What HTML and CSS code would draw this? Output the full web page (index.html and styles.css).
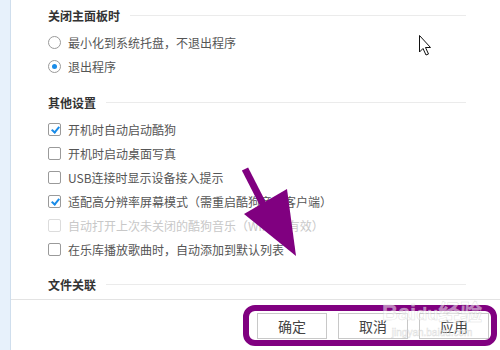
FILE: index.html
```html
<!DOCTYPE html>
<html>
  <head>
    <meta charset="UTF-8">
    <title>设置</title>
    <link rel="stylesheet" href="styles.css">
  </head>
  <body>
    <div class="side"></div>
    <div class="main">
      <div class="content">
        <div class="section-title"><span>关闭主面板时</span></div>
        <div class="options">
          <label class="option"><span class="radio"></span>最小化到系统托盘，不退出程序</label>
          <label class="option"><span class="radio checked"></span>退出程序</label>
        </div>

        <div class="section-title gap"><span>其他设置</span></div>
        <div class="options">
          <label class="option"><span class="check checked"></span>开机时自动启动酷狗</label>
          <label class="option"><span class="check"></span>开机时启动桌面写真</label>
          <label class="option"><span class="check"></span>USB连接时显示设备接入提示</label>
          <label class="option"><span class="check checked"></span>适配高分辨率屏幕模式（需重启酷狗音乐客户端）</label>
          <label class="option disabled"><span class="check"></span>自动打开上次未关闭的酷狗音乐（Win7下有效）</label>
          <label class="option"><span class="check"></span>在乐库播放歌曲时，自动添加到默认列表</label>
        </div>

        <div class="section-title gap2"><span>文件关联</span></div>
      </div>

      <div class="footer">
        <button class="btn">确定</button>
        <button class="btn">取消</button>
        <button class="btn">应用</button>
      </div>
    </div>

    <!-- annotations drawn over the screenshot -->
    <svg class="overlay" width="500" height="350" viewBox="0 0 500 350">
      <line x1="245" y1="169" x2="268" y2="214" stroke="#800080" stroke-width="7"/>
      <polygon points="244,214 287,189 296,256" fill="#800080"/>
      <rect x="246" y="308" width="248" height="35" rx="9" fill="none" stroke="#800080" stroke-width="6"/>
      <path d="M419.5 35.5 L419.5 52 L423 48.5 L426 55 L428.5 54 L425.5 47.5 L430.5 47.5 Z" fill="#fff" stroke="#111" stroke-width="1"/>
    </svg>
    <div class="watermark">
      <span class="wm-logo">Bai<b>du</b>经验</span>
      <span class="wm-url">jingyan.baidu.com</span>
    </div>
  </body>
</html>
```

FILE: styles.css
```css
body {
  margin: 0;
  width: 500px;
  height: 350px;
  display: flex;
  overflow: hidden;
  background-color: #fff;
  font-family: "Noto Sans CJK SC", "Liberation Sans", sans-serif;
  font-size: 12px;
  color: #444;
  position: relative;
}

.side {
  width: 10px;
  flex-shrink: 0;
  background-color: #e7f1fb;
  border-right: 1px solid #cfdeed;
}

.main {
  flex: 1;
  display: flex;
  flex-direction: column;
}

.content {
  padding: 3px 34px 3px 37px;
}

.section-title {
  display: flex;
  align-items: center;
  height: 24px;
  font-weight: bold;
  color: #333;
}

.section-title::after {
  content: "";
  flex: 1;
  height: 1px;
  margin-left: 10px;
  background-color: #ebebeb;
}

.section-title.gap {
  margin-top: 12px;
}

.section-title.gap2 {
  margin-top: 11px;
}

.options {
  margin-top: 3px;
  display: flex;
  flex-direction: column;
}

.option {
  display: flex;
  align-items: center;
  height: 24px;
  color: #555;
}

.option.disabled {
  color: #c8c8c8;
}

.radio,
.check {
  width: 11px;
  height: 11px;
  border: 1px solid #9a9a9a;
  margin-right: 7px;
  flex-shrink: 0;
  position: relative;
  background-color: #fff;
}

.radio {
  border-radius: 50%;
}

.radio.checked::after {
  content: "";
  position: absolute;
  left: 3px;
  top: 3px;
  width: 5px;
  height: 5px;
  border-radius: 50%;
  background-color: #1a8ce8;
}

.check {
  border-radius: 2px;
}

.check.checked::after {
  content: "";
  position: absolute;
  left: 3.5px;
  top: 1px;
  width: 3px;
  height: 6px;
  border-right: 2px solid #1a8ce8;
  border-bottom: 2px solid #1a8ce8;
  transform: rotate(40deg);
}

.disabled .check {
  border-color: #dcdcdc;
}

.footer {
  border-top: 1px solid #e3e3e3;
  display: flex;
  justify-content: flex-end;
  gap: 11px;
  padding: 13px 11px 0 0;
}

.btn {
  width: 70px;
  height: 26px;
  border: 1px solid #c8c8c8;
  background-color: #fff;
  font-family: "Noto Sans CJK SC", sans-serif;
  font-size: 14px;
  color: #444;
  padding: 0;
}

.overlay {
  position: absolute;
  left: 0;
  top: 0;
  pointer-events: none;
}

.watermark {
  position: absolute;
  left: 382px;
  top: 300px;
  display: flex;
  flex-direction: column;
  align-items: center;
  color: rgba(255, 255, 255, 0.5);
  -webkit-text-stroke: 0.5px rgba(190, 190, 190, 0.5);
  pointer-events: none;
}

.wm-logo {
  font-family: "Liberation Sans", "Noto Sans CJK SC", sans-serif;
  font-size: 22px;
  font-weight: bold;
  line-height: 26px;
}

.wm-logo b {
  font-size: 18px;
}

.wm-url {
  font-family: "Liberation Sans", sans-serif;
  font-size: 10px;
  line-height: 12px;
}
```
